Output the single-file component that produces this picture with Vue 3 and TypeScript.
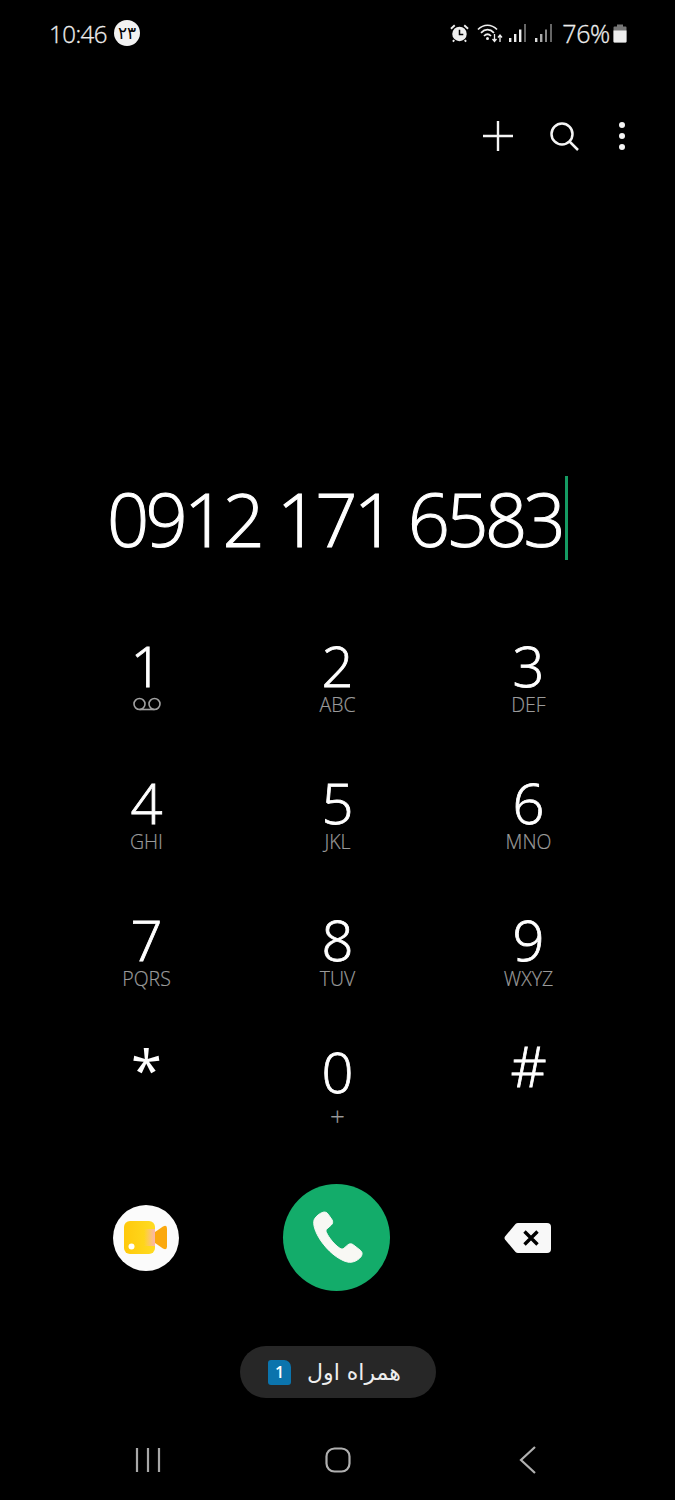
<script setup lang="ts">
interface DialKey {
  digit: string
  sub?: string
}

const keys: DialKey[] = [
  { digit: '1' },
  { digit: '2', sub: 'ABC' },
  { digit: '3', sub: 'DEF' },
  { digit: '4', sub: 'GHI' },
  { digit: '5', sub: 'JKL' },
  { digit: '6', sub: 'MNO' },
  { digit: '7', sub: 'PQRS' },
  { digit: '8', sub: 'TUV' },
  { digit: '9', sub: 'WXYZ' },
  { digit: '*' },
  { digit: '0', sub: '+' },
  { digit: '#' },
]
</script>

<template>
  <div class="phone">
    <header class="status">
      <div class="status-left">
        <span class="time">10:46</span>
        <span class="date-badge">۲۳</span>
      </div>
      <div class="status-right">
        <svg class="alarm" width="19" height="20" viewBox="0 0 20 20">
          <circle cx="10" cy="11" r="7.6" fill="#eee" />
          <path d="M10 6.500V11.500H14" fill="none" stroke="#000" stroke-width="1.600" />
          <path d="M1 5.500 5 1.800M19 5.500 15 1.800M4.500 17.500 3 19.200M15.500 17.500 17 19.200" stroke="#eee" stroke-width="2" fill="none" />
        </svg>
        <svg class="wifi" width="26" height="20" viewBox="0 0 26 20">
          <path d="M1 6.500C6.500 .8 14.500 .8 20 6.500M4 9.800C8 5.600 13 5.600 17 9.800M7 13C9.200 10.800 11.800 10.800 14 13" fill="none" stroke="#eee" stroke-width="1.700" />
          <circle cx="10.500" cy="15.500" r="1.500" fill="#eee" />
          <path d="M17.500 11V18M15.500 16 17.500 18.500 19.500 16M23 19V12.500M21 14.500 23 12 25 14.500" fill="none" stroke="#eee" stroke-width="1.300" />
        </svg>
        <svg class="signal" width="19" height="20" viewBox="0 0 19 20">
          <rect x="1" y="15" width="2.400" height="4" fill="#eee" />
          <rect x="6" y="11" width="2.400" height="8" fill="#eee" />
          <rect x="11" y="6.500" width="2.400" height="12.500" fill="#eee" />
          <rect x="16" y="1" width="2" height="18" fill="#666" />
        </svg>
        <svg class="signal second" width="19" height="20" viewBox="0 0 19 20">
          <rect x="1" y="15" width="2.400" height="4" fill="#ddd" />
          <rect x="6" y="11" width="2.400" height="8" fill="#aaa" />
          <rect x="11" y="6.500" width="2" height="12.500" fill="#888" />
          <rect x="16" y="1" width="2" height="18" fill="#666" />
        </svg>
        <span class="percent">76%</span>
        <svg class="battery" width="14" height="20" viewBox="0 0 14 20">
          <path d="M4 1.500H10V3.500H12.500Q13.500 3.500 13.500 4.500V18.500Q13.500 19.500 12.500 19.500H1.500Q.5 19.500 .5 18.500V4.500Q.5 3.500 1.500 3.500H4Z" fill="#777" />
          <path d="M.5 7.500H13.500V18.500Q13.500 19.500 12.500 19.500H1.500Q.5 19.500 .5 18.500Z" fill="#eee" />
        </svg>
      </div>
    </header>

    <div class="toolbar">
      <svg width="30" height="30" viewBox="0 0 30 30">
        <path d="M15 0V30M0 15H30" stroke="#f5f5f5" stroke-width="2.400" fill="none" />
      </svg>
      <svg class="search" width="29" height="29" viewBox="0 0 29 29">
        <circle cx="12" cy="12" r="10.500" stroke="#f5f5f5" stroke-width="2.500" fill="none" />
        <path d="M19.500 19.500 28 28" stroke="#f5f5f5" stroke-width="2.500" fill="none" />
      </svg>
      <div class="dots"><i></i><i></i><i></i></div>
    </div>

    <div class="number-row">
      <span class="number">0912 171 6583</span>
      <span class="caret"></span>
    </div>

    <div class="keypad">
      <div v-for="key in keys" :key="key.digit" class="key">
        <span class="digit" :class="{ star: key.digit === '*', hash: key.digit === '#', zero: key.digit === '0' }">{{ key.digit }}</span>
        <span v-if="key.sub" class="sub" :class="{ plus: key.sub === '+' }">{{ key.sub }}</span>
        <svg v-else-if="key.digit === '1'" class="voicemail" width="30" height="14" viewBox="0 0 30 14">
          <circle cx="7.500" cy="7" r="5.500" fill="none" stroke="#a0a0a0" stroke-width="1.600" />
          <circle cx="22.500" cy="7" r="5.500" fill="none" stroke="#a0a0a0" stroke-width="1.600" />
          <path d="M7.500 12.500H22.500" stroke="#a0a0a0" stroke-width="1.600" />
        </svg>
      </div>
    </div>

    <div class="actions">
      <div class="action">
        <div class="video-btn">
          <svg width="43" height="33" viewBox="0 0 43 33">
            <defs>
              <linearGradient id="camBody" x1="0" x2="1" y1="0" y2="0">
                <stop offset="0" stop-color="#ffc90c" />
                <stop offset="1" stop-color="#ffdc22" />
              </linearGradient>
              <linearGradient id="camGlow" x1="0" x2="1" y1="0" y2="0">
                <stop offset="0" stop-color="#fbb9a8" stop-opacity="0" />
                <stop offset="1" stop-color="#fbb4ac" />
              </linearGradient>
            </defs>
            <rect x="0" y="0" width="31" height="33" rx="6" fill="url(#camBody)" />
            <path d="M20 8H31V25H20Z" fill="url(#camGlow)" />
            <circle cx="7.500" cy="25.500" r="3" fill="#fff" />
            <path d="M31 11 39 5.500Q43 3.500 43 7.500V25.500Q43 29.500 39 27.500L31 22Z" fill="#fba90f" />
          </svg>
        </div>
      </div>
      <div class="action">
        <div class="call-btn">
          <svg width="59" height="59" viewBox="0 0 24 24">
            <path d="M6.600 1.700C5.400 2 3.500 3.300 2.900 4.800C2.300 6.600 3.300 9.900 5.700 13.400C8.300 17.200 12.500 21 16.500 22C18.700 22.500 21.400 21 22.200 19.400C22.600 18.500 22.400 17.800 21.700 17.200L18.900 15C18.100 14.400 17.300 14.400 16.600 15L15 16.400C14.500 16.800 14 16.800 13.400 16.400C11.300 15 8.900 12.200 7.900 9.900C7.600 9.300 7.700 8.800 8.200 8.400L9.800 7C10.500 6.400 10.600 5.600 10.200 4.800L8.600 2.500C8.100 1.800 7.400 1.500 6.600 1.700Z" fill="#f8f8f4" stroke="#f8f8f4" stroke-width=".4" stroke-linejoin="round" />
          </svg>
        </div>
      </div>
      <div class="action">
        <svg width="48" height="32" viewBox="0 0 48 32">
          <path d="M14 1H43Q47 1 47 5V27Q47 31 43 31H14Q12.500 31 11.500 30L1 17.500Q0 16 1 14.500L11.500 2Q12.500 1 14 1Z" fill="#f8f8f8" />
          <path d="M20.500 9.500 33.500 22.500M33.500 9.500 20.500 22.500" stroke="#000" stroke-width="3.400" fill="none" />
        </svg>
      </div>
    </div>

    <div class="sim-row">
      <div class="sim-pill">
        <span class="sim-name" dir="rtl">همراه اول</span>
        <span class="sim-badge">1</span>
      </div>
    </div>

    <nav class="navbar">
      <svg width="28" height="26" viewBox="0 0 28 26">
        <path d="M3 1V25M14 1V25M25 1V25" stroke="#a8a8a8" stroke-width="2.200" fill="none" />
      </svg>
      <svg width="26" height="26" viewBox="0 0 26 26">
        <rect x="1.500" y="1.500" width="23" height="23" rx="8" stroke="#b0b0b0" stroke-width="2.200" fill="none" />
      </svg>
      <svg width="18" height="28" viewBox="0 0 18 28">
        <path d="M16 1 2 14 16 27" stroke="#b0b0b0" stroke-width="2.200" fill="none" />
      </svg>
    </nav>
  </div>
</template>

<style>
body {
  background: #000;
}
</style>

<style scoped>
.phone {
  width: 675px;
  height: 1500px;
  background: #000;
  color: #fff;
  font-family: "Open Sans", "DejaVu Sans", sans-serif;
  display: flex;
  flex-direction: column;
  overflow: hidden;
}

.status {
  height: 66px;
  padding: 0 48px 0 49px;
  display: flex;
  justify-content: space-between;
  align-items: center;
  color: #eee;
}

.status-left,
.status-right {
  display: flex;
  align-items: center;
}

.time {
  font-size: 24px;
  font-weight: 300;
  letter-spacing: -0.5px;
  -webkit-text-stroke: 0.3px #eee;
}

.date-badge {
  width: 26px;
  height: 26px;
  margin-left: 7px;
  border-radius: 50%;
  background: #f2f2f2;
  color: #000;
  font-family: "DejaVu Sans", sans-serif;
  font-size: 17px;
  display: flex;
  align-items: center;
  justify-content: center;
}

.wifi {
  margin-left: 8px;
}

.signal {
  margin-left: 5px;
}

.signal.second {
  margin-left: 7px;
}

.percent {
  margin-left: 9px;
  font-size: 25px;
  font-weight: 300;
  letter-spacing: -0.3px;
  -webkit-text-stroke: 0.3px #eee;
}

.battery {
  margin-left: 3px;
}

.toolbar {
  height: 68px;
  margin-top: 36px;
  padding-right: 50px;
  display: flex;
  justify-content: flex-end;
  align-items: center;
}

.search {
  margin-left: 37px;
}

.dots {
  margin-left: 40px;
  width: 6px;
  display: flex;
  flex-direction: column;
  gap: 5px;
}

.dots i {
  width: 6px;
  height: 6px;
  border-radius: 50%;
  background: #f5f5f5;
}

.number-row {
  height: 110px;
  margin-top: 293px;
  display: flex;
  justify-content: center;
  align-items: center;
}

.number {
  font-size: 74px;
  font-weight: 300;
  letter-spacing: -3.7px;
  white-space: nowrap;
  -webkit-text-stroke: 1px #fff;
}

.caret {
  width: 3px;
  height: 84px;
  margin-left: 3px;
  background: #159b63;
}

.keypad {
  margin-top: 62px;
  padding: 0 51px;
  display: grid;
  grid-template-columns: repeat(3, 191px);
  grid-auto-rows: 137px;
}

.key {
  display: flex;
  flex-direction: column;
  align-items: center;
}

.digit {
  font-size: 56px;
  font-weight: 300;
  line-height: 60px;
  height: 60px;
  -webkit-text-stroke: 0.8px #fff;
}

.digit.zero {
  margin-top: -5px;
  margin-bottom: 5px;
}

.digit.star {
  margin-top: -7px;
  font-weight: 400;
  -webkit-text-stroke: 0;
}

.digit.hash {
  margin-top: -11px;
}

.sub {
  font-size: 19.5px;
  line-height: 18px;
  color: #9b9b9b;
  font-weight: 300;
  margin-top: 1px;
  -webkit-text-stroke: 0.2px #9b9b9b;
}

.sub.plus {
  font-size: 26px;
}

.voicemail {
  margin-top: 2px;
}

.actions {
  margin-top: 1px;
  padding: 0 50px;
  height: 106px;
  display: grid;
  grid-template-columns: repeat(3, 191px);
  align-items: center;
}

.action {
  display: flex;
  justify-content: center;
  align-items: center;
}

.video-btn {
  width: 66px;
  height: 66px;
  border-radius: 50%;
  background: #fbfbfb;
  display: flex;
  align-items: center;
  justify-content: center;
}

.call-btn {
  width: 107px;
  height: 107px;
  border-radius: 50%;
  background: #13ac6a;
  display: flex;
  align-items: center;
  justify-content: center;
}

.sim-row {
  margin-top: 56px;
  display: flex;
  justify-content: center;
}

.sim-pill {
  width: 196px;
  height: 52px;
  box-sizing: border-box;
  padding-right: 6px;
  border-radius: 26px;
  background: #272727;
  display: flex;
  flex-direction: row-reverse;
  justify-content: center;
  align-items: center;
  gap: 16px;
}

.sim-name {
  font-family: "DejaVu Sans", sans-serif;
  font-size: 22px;
  color: #eee;
}

.sim-badge {
  width: 23px;
  height: 25px;
  border-radius: 3px 7px 3px 3px;
  background: #0b74ad;
  color: #fff;
  font-size: 16px;
  font-weight: 600;
  display: flex;
  align-items: center;
  justify-content: center;
}

.navbar {
  margin-top: 47px;
  height: 30px;
  padding-left: 53px;
  display: grid;
  grid-template-columns: repeat(3, 190px);
  justify-items: center;
  align-items: center;
}
</style>
